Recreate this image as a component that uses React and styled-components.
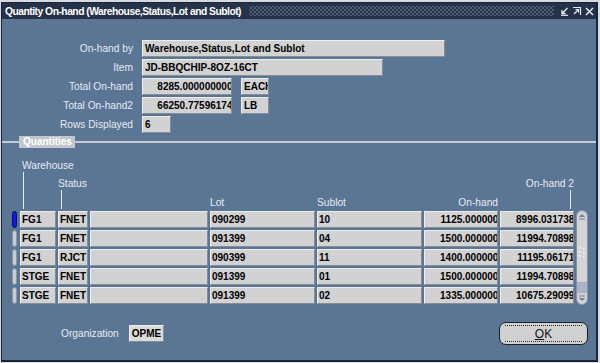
import React from "react";
import styled, { createGlobalStyle } from "styled-components";

const GlobalStyle = createGlobalStyle`
  html, body { margin: 0; padding: 0; background: #d6dbe2; }
  body { font-family: "Liberation Sans", Arial, sans-serif; }
`;

const Window = styled.div`
  box-sizing: border-box;
  width: 597px;
  height: 360px;
  margin: 2px 0 0 1px;
  background: #5b7595;
  border: solid #1b2536;
  border-width: 1px 2px 2px 1px;
  display: flex;
  flex-direction: column;
`;

const TitleBar = styled.div`
  height: 16px;
  background: #25324a;
  display: flex;
  align-items: center;
  padding: 0 2px 0 3px;
`;

const Title = styled.span`
  color: #fff;
  font-weight: bold;
  font-size: 10.3px;
  letter-spacing: -0.5px;
  white-space: nowrap;
`;

const Dots = styled.div`
  flex: 1;
  height: 10px;
  margin: 0 6px 0 8px;
  background-image:
    radial-gradient(circle, #6b778c 0.6px, transparent 0.9px),
    radial-gradient(circle, #6b778c 0.6px, transparent 0.9px);
  background-size: 4px 4px;
  background-position: 0 0, 2px 2px;
`;

const Controls = styled.div`
  display: flex;
  gap: 3px;
  align-items: center;
`;

const Body = styled.div`
  flex: 1;
  display: flex;
  flex-direction: column;
`;

const Form = styled.div`
  margin-top: 21px;
  display: flex;
  flex-direction: column;
  gap: 2px;
`;

const FormRow = styled.div`
  display: flex;
  align-items: center;
  gap: 9px;
  height: 17px;
`;

const Label = styled.span`
  width: 131px;
  text-align: right;
  color: #e6ebf1;
  font-size: 10.2px;
  white-space: nowrap;
`;

const Field = styled.div`
  box-sizing: border-box;
  width: ${(p) => p.$w}px;
  height: 17px;
  background: ${(p) => (p.$light ? "#dadada" : "#d2d2d2")};
  border: 1px solid;
  border-color: #eeeeee #858d99 #858d99 #eeeeee;
  color: #000;
  font-weight: bold;
  font-size: 10px;
  padding: 0 1px 0 2px;
  overflow: hidden;
  white-space: nowrap;
  display: flex;
  align-items: center;
  justify-content: ${(p) => (p.$num ? "flex-end" : "flex-start")};
`;

const NumText = styled.span`
  flex-shrink: 0;
  margin-right: -8px;
`;

const Section = styled.div`
  margin-top: 3px;
  height: 12px;
  display: flex;
  align-items: center;
`;

const SectionLine = styled.div`
  height: 2px;
  background: #c7cbd2;
  width: ${(p) => (p.$w ? `${p.$w}px` : "auto")};
  flex: ${(p) => (p.$w ? "none" : 1)};
`;

const SectionTitle = styled.span`
  background: #c2c6cd;
  color: #fff;
  font-weight: bold;
  font-size: 10px;
  line-height: 12px;
  padding: 0 3px 0 4px;
`;

const Table = styled.div`
  margin-top: 12px;
  padding-left: 10px;
  display: grid;
  grid-template-columns: 6px 36px 30px 118px 105px 105px 74px 74px 12px;
  column-gap: 2px;
  row-gap: 2px;
  grid-auto-rows: 17px;
  grid-template-rows: auto;
`;

const HeadCell = styled.div`
  align-self: end;
  display: flex;
  flex-direction: column;
  align-items: ${(p) => (p.$right ? "flex-end" : "flex-start")};
  padding-left: ${(p) => p.$pad || 0}px;
  color: #e6ebf1;
  font-size: 10.2px;
  line-height: 12px;
  white-space: nowrap;
`;

const Tick = styled.div`
  width: 1px;
  height: ${(p) => p.$h}px;
  background: #e6ebf1;
  margin: 0 ${(p) => p.$mr || 0}px 0 ${(p) => p.$ml || 0}px;
`;

const Indicator = styled.div`
  box-sizing: border-box;
  width: 5px;
  height: 17px;
  border-radius: 3px;
  background: ${(p) => (p.$current ? "#0a14ff" : "#c9cbcf")};
  border: 1px solid ${(p) => (p.$current ? "#10163a" : "#8d96a3")};
`;

const Cell = styled(Field)`
  width: auto;
  padding-left: 1px;
`;

const Scrollbar = styled.div`
  grid-column: 9;
  grid-row: 2 / span 5;
  margin: -1px 0;
  box-sizing: border-box;
  border: 1px solid #8792a4;
  border-radius: 6px;
  background: #cfd1d4;
  display: flex;
  flex-direction: column;
  overflow: hidden;
`;

const ScrollArrow = styled.div`
  height: 11px;
  display: flex;
  align-items: center;
  justify-content: center;
`;

const Thumb = styled.div`
  flex: 1;
  display: flex;
  align-items: center;
  justify-content: center;
  background: #d3d4d6;
  border-bottom: 1px solid #a2adbd;
`;

const TrackRest = styled.div`
  height: 10px;
  background: #aab6c7;
`;

const Footer = styled.div`
  margin-top: 18px;
  display: flex;
  align-items: center;
  padding: 0 8px 0 59px;
  height: 23px;
`;

const OrgLabel = styled.span`
  color: #e6ebf1;
  font-size: 10.2px;
  margin-right: 10px;
`;

const Spacer = styled.div`
  flex: 1;
`;

const OkButton = styled.button`
  box-sizing: border-box;
  width: 89px;
  height: 23px;
  border-radius: 7px;
  border: 1px solid #1a1f28;
  background: #d1d1d1;
  padding: 2px 5px;
  display: flex;
  font-family: inherit;
`;

const OkFace = styled.span`
  flex: 1;
  border-top: 1px dotted #303030;
  border-bottom: 1px dotted #303030;
  display: flex;
  align-items: center;
  justify-content: center;
  font-size: 12px;
  color: #111;
  u { text-decoration: underline; }
`;

const rows = [
  { wh: "FG1", st: "FNET", lot: "090299", sub: "10", oh: "1125.0000000", oh2: "8996.0317383" },
  { wh: "FG1", st: "FNET", lot: "091399", sub: "04", oh: "1500.0000000", oh2: "11994.708984" },
  { wh: "FG1", st: "RJCT", lot: "090399", sub: "11", oh: "1400.0000000", oh2: "11195.061719" },
  { wh: "STGE", st: "FNET", lot: "091399", sub: "01", oh: "1500.0000000", oh2: "11994.708984" },
  { wh: "STGE", st: "FNET", lot: "091399", sub: "02", oh: "1335.0000000", oh2: "10675.290990" },
];

const MinIcon = () => (
  <svg width="9" height="9" viewBox="0 0 9 9">
    <path d="M7.5 1 L2.5 6 M2 3 V6.5 H5.5" stroke="#e8ecf2" strokeWidth="1.3" fill="none" />
    <path d="M1 8.3 H8" stroke="#e8ecf2" strokeWidth="1.2" />
  </svg>
);

const MaxIcon = () => (
  <svg width="10" height="10" viewBox="0 0 10 10">
    <path d="M1 1.5 H8.5 V9" stroke="#e8ecf2" strokeWidth="1.2" fill="none" />
    <path d="M2 8 L6.5 3.5 M3.5 3.5 H6.5 V6.5" stroke="#e8ecf2" strokeWidth="1.2" fill="none" />
  </svg>
);

const CloseIcon = () => (
  <svg width="9" height="9" viewBox="0 0 9 9">
    <path d="M1 1 L8 8 M8 1 L1 8" stroke="#e8ecf2" strokeWidth="1.5" />
  </svg>
);

const Arrow = ({ down }) => (
  <svg width="8" height="7" viewBox="0 0 8 7">
    {down ? (
      <>
        <path d="M1 1 H7" stroke="#6b7f9c" strokeWidth="1" />
        <path d="M1 3 L4 6 L7 3 Z" fill="#6b7f9c" />
      </>
    ) : (
      <>
        <path d="M1 4 L4 1 L7 4 Z" fill="#6b7f9c" />
        <path d="M1 6 H7" stroke="#6b7f9c" strokeWidth="1" />
      </>
    )}
  </svg>
);

const Grip = () => (
  <svg width="6" height="12" viewBox="0 0 6 12">
    {[1, 5, 9].map((y) => (
      <g key={y}>
        <rect x="0" y={y} width="1.5" height="1.5" fill="#f4f6f8" />
        <rect x="4" y={y + 1} width="1.5" height="1.5" fill="#f4f6f8" />
      </g>
    ))}
  </svg>
);

export default function App() {
  return (
    <>
      <GlobalStyle />
      <Window>
        <TitleBar>
          <Title>Quantity On-hand (Warehouse,Status,Lot and Sublot)</Title>
          <Dots />
          <Controls>
            <MinIcon />
            <MaxIcon />
            <CloseIcon />
          </Controls>
        </TitleBar>
        <Body>
          <Form>
            <FormRow>
              <Label>On-hand by</Label>
              <Field $w={303}>Warehouse,Status,Lot and Sublot</Field>
            </FormRow>
            <FormRow>
              <Label>Item</Label>
              <Field $w={241}>JD-BBQCHIP-8OZ-16CT</Field>
            </FormRow>
            <FormRow>
              <Label>Total On-hand</Label>
              <Field $w={90} $num>
                <NumText>8285.0000000000</NumText>
              </Field>
              <Field $w={28}>EACH</Field>
            </FormRow>
            <FormRow>
              <Label>Total On-hand2</Label>
              <Field $w={90} $num>
                <NumText>66250.775961742</NumText>
              </Field>
              <Field $w={28}>LB</Field>
            </FormRow>
            <FormRow>
              <Label>Rows Displayed</Label>
              <Field $w={29}>6</Field>
            </FormRow>
          </Form>

          <Section>
            <SectionLine $w={17} />
            <SectionTitle>Quantities</SectionTitle>
            <SectionLine />
          </Section>

          <Table>
            <div />
            <HeadCell $pad={2}>
              Warehouse
              <Tick $h={37} $ml={1} />
            </HeadCell>
            <HeadCell>
              Status
              <Tick $h={19} $ml={3} />
            </HeadCell>
            <div />
            <HeadCell>Lot</HeadCell>
            <HeadCell>Sublot</HeadCell>
            <HeadCell $right>On-hand</HeadCell>
            <HeadCell $right>
              On-hand 2
              <Tick $h={19} $mr={3} />
            </HeadCell>
            <div />

            {rows.map((r, i) => (
              <React.Fragment key={i}>
                <Indicator $current={i === 0} />
                <Cell>{r.wh}</Cell>
                <Cell>{r.st}</Cell>
                <Cell />
                <Cell>{r.lot}</Cell>
                <Cell>{r.sub}</Cell>
                <Cell $num>
                  <NumText>{r.oh}</NumText>
                </Cell>
                <Cell $num>
                  <NumText>{r.oh2}</NumText>
                </Cell>
              </React.Fragment>
            ))}

            <Scrollbar>
              <ScrollArrow>
                <Arrow />
              </ScrollArrow>
              <Thumb>
                <Grip />
              </Thumb>
              <TrackRest />
              <ScrollArrow>
                <Arrow down />
              </ScrollArrow>
            </Scrollbar>
          </Table>

          <Footer>
            <OrgLabel>Organization</OrgLabel>
            <Field $w={35} $light>OPME</Field>
            <Spacer />
            <OkButton>
              <OkFace>
                <u>O</u>K
              </OkFace>
            </OkButton>
          </Footer>
        </Body>
      </Window>
    </>
  );
}
